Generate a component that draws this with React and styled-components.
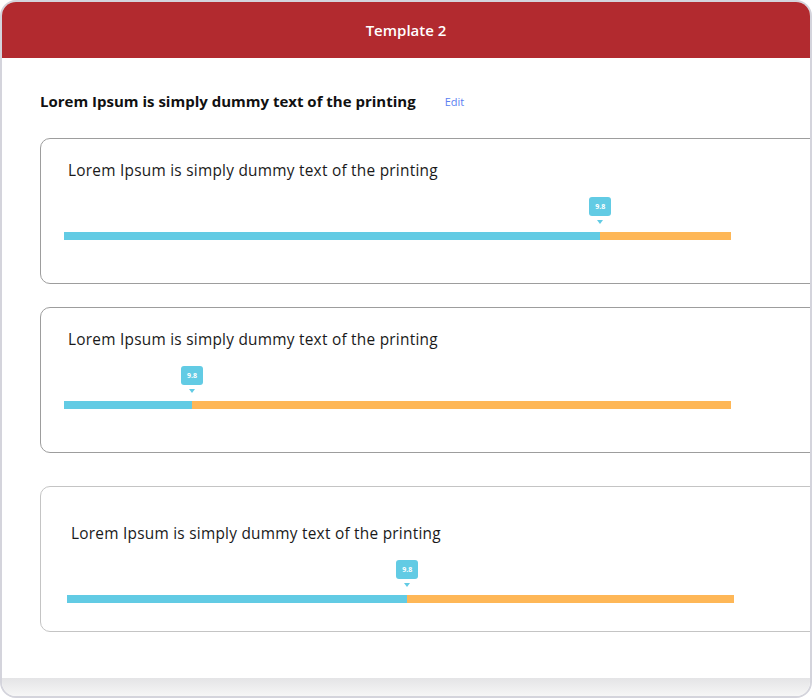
import React from "react";
import styled, { createGlobalStyle } from "styled-components";

const items = [
    { id: 1, label: "Lorem Ipsum is simply dummy text of the printing", value: 9.8, pct: 80.4 },
    { id: 2, label: "Lorem Ipsum is simply dummy text of the printing", value: 9.8, pct: 19.2 },
    { id: 3, label: "Lorem Ipsum is simply dummy text of the printing", value: 9.8, pct: 51, loose: true },
];

const App = () => {
    return (
        <>
            <GlobalStyle />
            <Frame>
                <Header>Template 2</Header>
                <Body>
                    <TitleRow>
                        <Title>Lorem Ipsum is simply dummy text of the printing</Title>
                        <EditLink>Edit</EditLink>
                    </TitleRow>
                    <List>
                        {items.map((item) => (
                            <Card key={item.id} $loose={item.loose}>
                                <Label>{item.label}</Label>
                                <Track>
                                    <Filled style={{ width: `${item.pct}%` }} />
                                    <Rest />
                                    <Bubble style={{ left: `${item.pct}%` }}>{item.value}</Bubble>
                                </Track>
                            </Card>
                        ))}
                    </List>
                </Body>
                <Footer />
            </Frame>
        </>
    );
};

export default App;

// ---------------- Styled Components ----------------
const GlobalStyle = createGlobalStyle`
  body {
    margin: 0;
    background: #fff;
    font-family: "Open Sans", "Liberation Sans", sans-serif;
  }
`;

const Frame = styled.div`
  width: 812px;
  height: 698px;
  box-sizing: border-box;
  border: 2px solid #d4d4dc;
  border-radius: 16px;
  overflow: hidden;
  display: flex;
  flex-direction: column;
  background: #fff;
`;

const Header = styled.header`
  height: 56px;
  flex-shrink: 0;
  background: #b22a2f;
  color: #fff;
  display: flex;
  align-items: center;
  justify-content: center;
  font-size: 15px;
  font-weight: 600;
`;

const Body = styled.main`
  flex: 1;
  padding: 32px 0 0 38px;
  overflow: hidden;
`;

const TitleRow = styled.div`
  display: flex;
  align-items: center;
  gap: 29px;
  height: 22px;
`;

const Title = styled.h1`
  margin: 0;
  font-size: 15px;
  font-weight: 700;
  color: #111;
`;

const EditLink = styled.span`
  font-size: 11px;
  color: #5a80f2;
  cursor: pointer;
`;

const List = styled.div`
  margin-top: 26px;
  display: flex;
  flex-direction: column;
  gap: 23px;
`;

const Card = styled.section`
  width: 800px;
  height: 146px;
  box-sizing: border-box;
  border: 1px solid ${(p) => (p.$loose ? "#c4c4c4" : "#9d9d9d")};
  border-radius: 10px;
  padding: ${(p) => (p.$loose ? "36px 0 0 26px" : "21px 0 0 23px")};
  margin-top: ${(p) => (p.$loose ? "10px" : "0")};
`;

const Label = styled.p`
  margin: 0 0 0 4px;
  font-size: 15.4px;
  letter-spacing: 0.25px;
  line-height: 22px;
  color: #1a1a1a;
`;

const Track = styled.div`
  position: relative;
  display: flex;
  width: 667px;
  height: 8px;
  margin-top: 50px;
`;

const Filled = styled.div`
  background: #62cbe4;
`;

const Rest = styled.div`
  flex: 1;
  background: #feb757;
`;

const Bubble = styled.div`
  position: absolute;
  bottom: 24px;
  transform: translateX(-50%);
  width: 22px;
  height: 19px;
  border-radius: 3px;
  background: #62cbe4;
  color: #fff;
  font-size: 7px;
  font-weight: 700;
  display: flex;
  align-items: center;
  justify-content: center;

  &::after {
    content: "";
    position: absolute;
    top: 23px;
    left: 50%;
    transform: translateX(-50%);
    border-left: 3.5px solid transparent;
    border-right: 3.5px solid transparent;
    border-top: 4px solid #62cbe4;
  }
`;

const Footer = styled.div`
  height: 18px;
  flex-shrink: 0;
  background: linear-gradient(#e4e4e6, #f6f6f6);
`;
